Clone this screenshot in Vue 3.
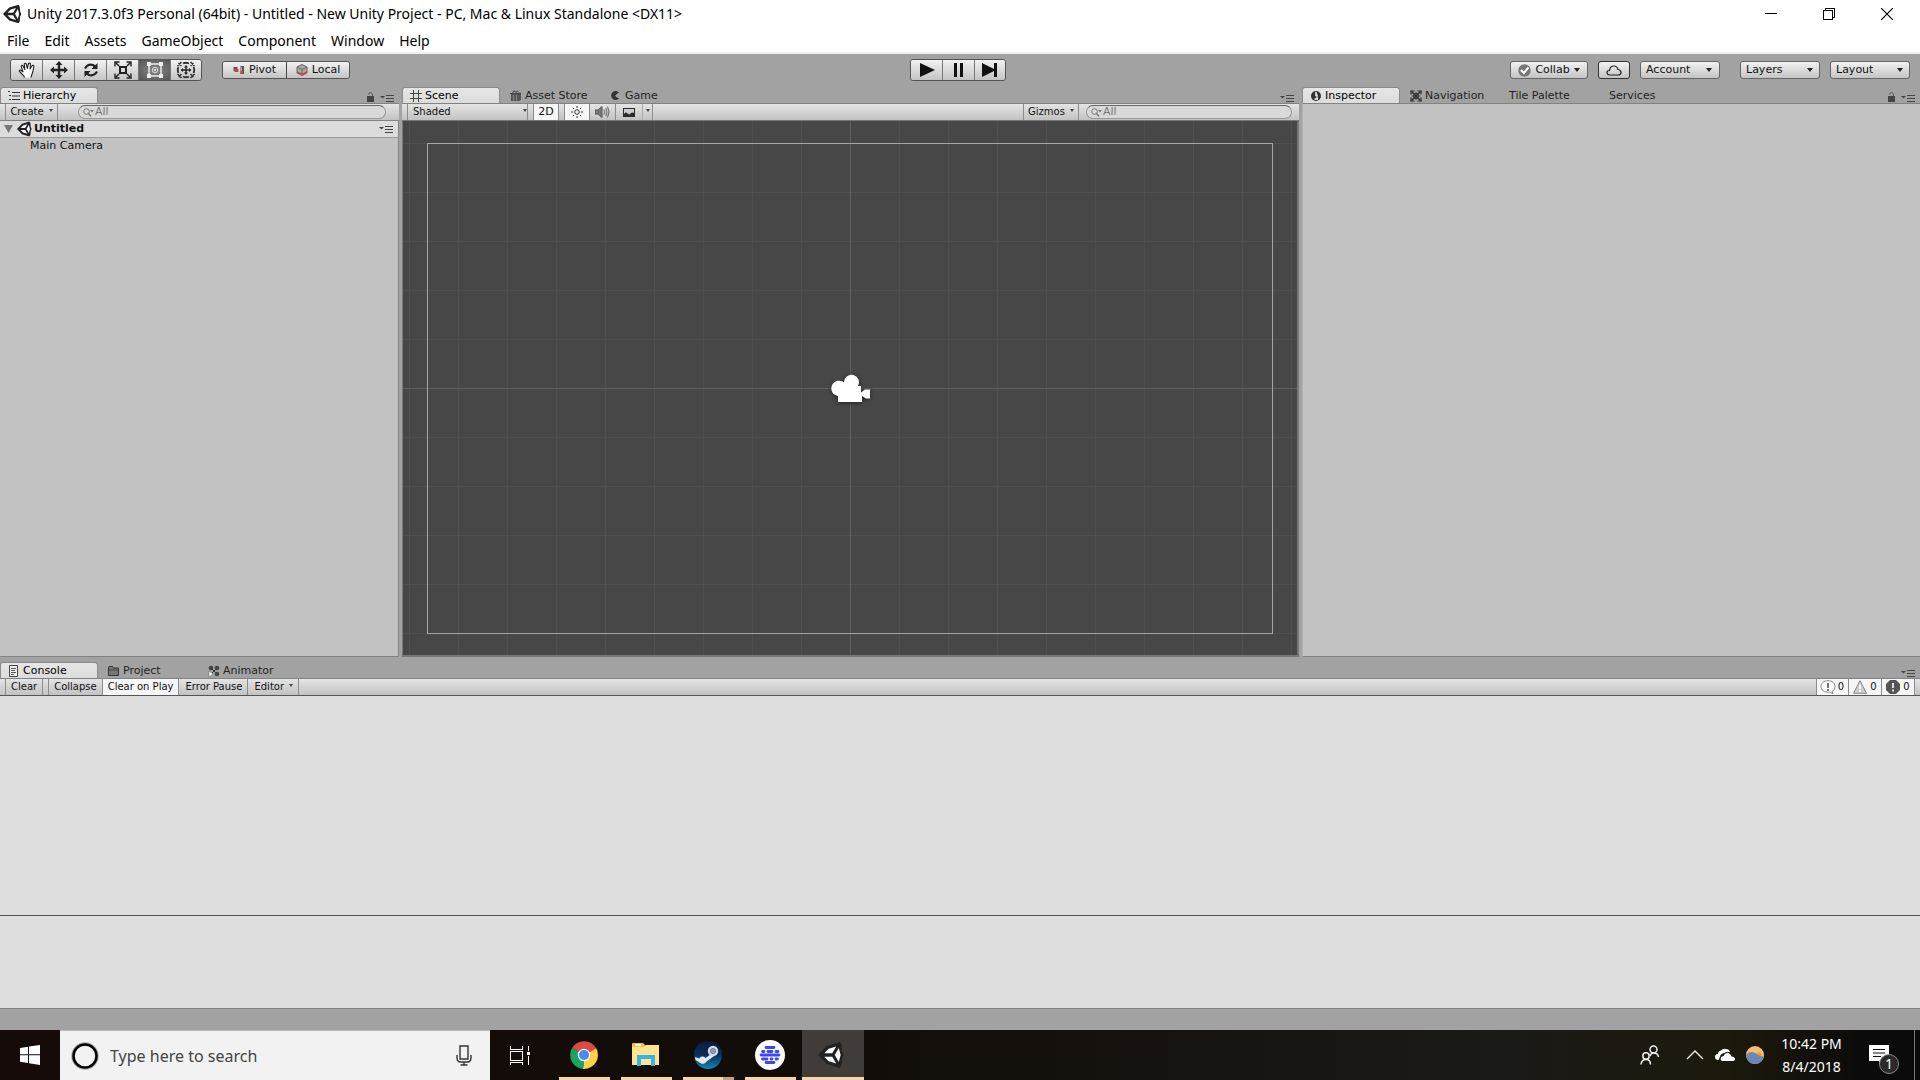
<script setup>
import { ref } from 'vue'

const menus = ['File', 'Edit', 'Assets', 'GameObject', 'Component', 'Window', 'Help']
const tools = ['hand', 'move', 'rotate', 'scale', 'rect', 'transform']
const activeTool = ref('rect')
const gridX = [-9, -8, -7, -6, -5, -4, -3, -2, -1, 1, 2, 3, 4, 5, 6, 7, 8, 9]
const gridY = [-5, -4, -3, -2, -1, 1, 2, 3, 4, 5]
const apps = [
  { id: 'chrome', label: 'Google Chrome' },
  { id: 'explorer', label: 'File Explorer' },
  { id: 'steam', label: 'Steam' },
  { id: 'disc', label: 'Music' },
  { id: 'unity', label: 'Unity' },
]
</script>

<template>
  <div class="desktop">
    <svg class="defs" aria-hidden="true">
      <defs>
        <symbol id="unity" viewBox="0 0 24 24">
          <path d="M0 12 7.5 4.2 18.6 0.8 20 3 20.6 9 22 12 20.6 15 20 21 18.6 23.2 7.5 19.8Z" fill="#222" />
          <path d="M5.4 10.6 9.2 6.6 15.6 4.8 12.2 10.6ZM5.4 13.4 9.2 17.4 15.6 19.2 12.2 13.4ZM17.8 6 19.4 12 17.8 18 14.4 12Z" fill="#fff" />
        </symbol>
        <symbol id="paneMenu" viewBox="0 0 14 8">
          <path d="M0 2h5L2.5 4.5Z" fill="#444" /><path d="M6 1.5h8M6 4.5h8M6 7.5h8" stroke="#444" />
        </symbol>
        <symbol id="lock" viewBox="0 0 8 10">
          <path d="M1 4h7v6H1Z" fill="#444" /><path d="M2.5 2.5Q3 .5 4.500 .5 6.500 .5 6.500 4" fill="none" stroke="#555" />
        </symbol>
        <symbol id="lens" viewBox="0 0 11 9">
          <circle cx="3.500" cy="3.500" r="2.800" fill="none" stroke="#777" /><path d="M5.500 5.500 8 8.500" stroke="#777" stroke-width="1.300" /><path d="M7 2h4L9 4.500Z" fill="#777" />
        </symbol>
        <linearGradient id="steamFill" x1="0" y1="0" x2="0" y2="1"><stop offset="0" stop-color="#0b1a3c" /><stop offset=".5" stop-color="#0b2f5d" /><stop offset="1" stop-color="#1387b8" /></linearGradient>
      </defs>
    </svg>

    <header class="titlebar">
      <svg class="app-logo"><use href="#unity" /></svg>
      <h1>Unity 2017.3.0f3 Personal (64bit) - Untitled - New Unity Project - PC, Mac &amp; Linux Standalone &lt;DX11&gt;</h1>
      <div class="window-controls">
        <button aria-label="Minimize"><svg width="12" height="12" shape-rendering="crispEdges"><path d="M0 5.500h12" stroke="#000" /></svg></button>
        <button aria-label="Restore"><svg width="12" height="12" fill="none" stroke="#000" shape-rendering="crispEdges"><path d="M.5 2.500h9v9h-9ZM2.500 2.500v-2h9v9h-2" /></svg></button>
        <button aria-label="Close"><svg width="12" height="12"><path d="M0 0 12 12M12 0 0 12" stroke="#000" stroke-width="1.200" /></svg></button>
      </div>
    </header>
    <nav class="menubar"><button v-for="m in menus" :key="m">{{ m }}</button></nav>

    <div class="toolbar">
      <div class="group">
        <div class="strip">
          <button v-for="t in tools" :key="t" :aria-label="t" :class="{ on: activeTool === t }" @click="activeTool = t">
            <svg v-if="t === 'hand'" width="18" height="18" viewBox="0 0 18 18" fill="#fff" stroke="#222" stroke-width="1.100" stroke-linejoin="round"><path d="M6.500 16.500Q6 14.500 4.500 13.500L1.500 10.500Q1 9 2.500 9L5 10.800 3.300 5.500Q3.300 4 4.800 4.500L6.800 8.500 6.300 3Q7 1.500 8.300 2.800L9.300 7.500 10.500 2.500Q12 1.500 12.500 3L12 8 14.300 4.500Q16 4 15.800 5.700L14.800 11 12.800 16.500" /></svg>
            <svg v-else-if="t === 'move'" width="18" height="18" viewBox="0 0 18 18" fill="#222"><path d="M9 0 12.500 4H10.200V7.800H14V5.500L18 9 14 12.500V10.200H10.200V14H12.500L9 18 5.500 14H7.800V10.200H4V12.500L0 9 4 5.500V7.800H7.800V4H5.500Z" /></svg>
            <svg v-else-if="t === 'rotate'" width="18" height="18" viewBox="0 0 18 18"><path d="M3 7.500Q6 2.500 11 4L13 5.500M15 10.500Q12 15.500 7 14L5 12.500" fill="none" stroke="#222" stroke-width="2.200" /><path d="M15.500 2V8H9.500ZM2.500 16V10H8.500Z" fill="#222" /></svg>
            <svg v-else-if="t === 'scale'" width="18" height="18" viewBox="0 0 18 18"><path d="M6 6h6v6H6Z" fill="none" stroke="#222" stroke-width="2" /><path d="M1.500 1.500 5 5M16.500 1.500 13 5M1.500 16.500 5 13M16.500 16.500 13 13" stroke="#222" stroke-width="1.500" /><path d="M1 5.500V1H5.500M12.500 1H17V5.500M17 12.500V17H12.500M5.500 17H1V12.500" fill="none" stroke="#222" stroke-width="1.400" /></svg>
            <svg v-else-if="t === 'rect'" width="18" height="18" viewBox="0 0 18 18"><path d="M3 3h12v12H3Z" fill="none" stroke="#eee" stroke-width="1.500" /><path d="M1 1h4v4H1ZM13 1h4v4h-4ZM1 13h4v4H1ZM13 13h4v4h-4Z" fill="#eee" /><circle cx="9" cy="9" r="2.800" fill="none" stroke="#ddd" /><circle cx="9" cy="9" r="1" fill="#fff" /></svg>
            <svg v-else width="20" height="18" viewBox="0 0 20 18"><path d="M10 4 12 6.500H10.700V8.300H13V7L15.500 9 13 11V9.700H10.700V11.500H12L10 14 8 11.500H9.300V9.700H7V11L4.500 9 7 7V8.300H9.300V6.500H8Z" fill="#222" /><path d="M2.500 12Q1 9 2.500 6M17.500 12Q19 9 17.500 6M7 2.500Q10 1 13 2.500M7 15.500Q10 17 13 15.500" fill="none" stroke="#333" stroke-width="1.800" /><path d="M1.500 5 5.500 1M14.500 1l4 4M18.500 13l-4 4M5.500 17l-4-4M2.500 2l3 3M17.500 2l-3 3M2.500 16l3-3M17.500 16l-3-3" fill="none" stroke="#333" stroke-width="1.500" /></svg>
          </button>
        </div>
        <div class="strip low wide">
          <button><svg width="12" height="10" viewBox="0 0 12 10"><path d="M.5 2h4v4h-4ZM7.500 1h3.500v8H7.500Z" fill="#555" /><path d="M1.500 4h4v3h-4ZM7.500 6h2.500v3H7.500Z" fill="#d33f4c" /><path d="M8 2h1v4H8Z" fill="#aaa" /></svg>Pivot</button>
          <button><svg width="12" height="12" viewBox="0 0 12 12"><path d="M6 .5 11 3V9L6 11.500 1 9V3Z" fill="#aaa" stroke="#666" /><path d="M1 3 6 5.500 11 3M6 5.500V11" fill="none" stroke="#666" /><path d="M1 8 6 10.500 11 8" fill="none" stroke="#d33f4c" stroke-width="1.400" /></svg>Local</button>
        </div>
      </div>
      <div class="strip play">
        <button aria-label="Play"><svg width="16" height="14"><path d="M1 0 16 7 1 14Z" fill="#111" /></svg></button>
        <button aria-label="Pause"><svg width="10" height="14"><path d="M0 0H3V14H0ZM6 0H9V14H6Z" fill="#111" /></svg></button>
        <button aria-label="Step"><svg width="16" height="14"><path d="M0 0 12 6V0H15V14H12V8L0 14Z" fill="#111" /></svg></button>
      </div>
      <div class="group right">
        <button class="pill collab"><svg width="13" height="13" viewBox="0 0 13 13"><circle cx="6.500" cy="6.500" r="6.200" fill="#777" /><path d="M3 6 5.800 9 10.500 3.500" fill="none" stroke="#fff" stroke-width="2" /></svg>Collab<i class="tri"></i></button>
        <button class="pill cloud" aria-label="Cloud"><svg width="16" height="11" viewBox="0 0 16 11"><path d="M4 10Q1 10 1 7.500 1 5.500 3.500 5.500 4 1 8 1 11 1 12 4.500 15 5 15 7.500 15 10 12 10Z" fill="none" stroke="#222" stroke-width="1.200" /></svg></button>
        <button class="pill drop">Account<i class="tri"></i></button>
        <label class="pick drop gap"><select class="pill" aria-label="Layers"><option>Layers</option></select><i class="tri"></i></label>
        <label class="pick drop"><select class="pill" aria-label="Layout"><option>Layout</option></select><i class="tri"></i></label>
      </div>
    </div>

    <main class="dock">
      <section class="pane">
        <div class="tabs">
          <button class="tab active"><svg width="12" height="10" viewBox="0 0 12 10"><path d="M0 .5h2M1 4.500h2M1 8.500h2M4 1.500h8M4 5h8M4 8.500h8" stroke="#333" /></svg>Hierarchy</button>
          <span class="corner"><svg width="8" height="10"><use href="#lock" /></svg><svg width="14" height="8"><use href="#paneMenu" /></svg></span>
        </div>
        <div class="minibar">
          <button class="cell create">Create<i class="tri small"></i></button>
          <label class="search hsearch"><svg width="11" height="9"><use href="#lens" /></svg><input placeholder="All" aria-label="Search hierarchy"></label>
        </div>
        <div class="body tree">
          <div class="scene-row"><svg width="9" height="8"><path d="M0 0H9L4.500 8Z" fill="#777" /></svg><svg width="16" height="16"><use href="#unity" /></svg><b>Untitled</b><svg class="end" width="14" height="8"><use href="#paneMenu" /></svg></div>
          <div class="item">Main Camera</div>
        </div>
      </section>

      <section class="pane">
        <div class="tabs">
          <button class="tab active"><svg width="12" height="12"><path d="M3.500 0V12M8.500 0V12M0 3.500H12M0 8.500H12" stroke="#444" /></svg>Scene</button>
          <button class="tab"><svg width="12" height="12" viewBox="0 0 12 12"><path d="M1 3.500h8v7.500H1ZM9 3.500l2-1V10l-2 1Z" fill="#555" /><path d="M0 3.500h11M3 3V1.500Q5 0 6 2.500V3M6 2Q8 0 9 2.500" fill="none" stroke="#444" /><path d="M3.500 5v5.500M6.500 5v5.500" stroke="#888" /></svg>Asset Store</button>
          <button class="tab"><svg width="12" height="12" viewBox="0 0 12 12"><path d="M9 2.500A4.500 4.500 0 1 0 9 8.500L5.500 6.500V5Z" fill="#333" /></svg>Game</button>
          <span class="corner"><svg width="14" height="8"><use href="#paneMenu" /></svg></span>
        </div>
        <div class="minibar">
          <label class="cell pick shaded"><select aria-label="Draw mode"><option>Shaded</option></select><i class="tri small"></i></label>
          <button class="cell lit twod">2D</button>
          <button class="cell lit icon sun" aria-label="Lighting"><svg width="12" height="12" viewBox="0 0 12 12"><circle cx="6" cy="6" r="2.300" fill="none" stroke="#333" /><path d="M6 0V2M6 10V12M0 6H2M10 6H12M1.800 1.800 3 3M9 9l1.200 1.200M1.800 10.200 3 9M9 3l1.200-1.200" stroke="#333" /></svg></button>
          <button class="cell icon" aria-label="Audio"><svg width="15" height="12" viewBox="0 0 15 12"><path d="M0 4H3L7 .5V11.500L3 8H0Z" fill="#777" stroke="#555" /><path d="M9 3.500Q10.500 6 9 8.500M11 2Q13 6 11 10M12.500 .5Q15.500 6 12.500 11.500" fill="none" stroke="#666" /></svg></button>
          <button class="cell icon effects" aria-label="Effects"><svg width="12" height="9" viewBox="0 0 12 9"><path d="M0 0h12v9H0Z" fill="#2c2c2c" /><path d="M1 1H11V5Q8.500 3.500 6.500 6.500L4.500 5.500Q3 3.500 1 6Z" fill="#ccc" /></svg></button>
          <button class="cell fx" aria-label="Effects menu"><i class="tri small"></i></button>
          <button class="cell gizmos">Gizmos<i class="tri small"></i></button>
          <label class="search ssearch"><svg width="11" height="9"><use href="#lens" /></svg><input placeholder="All" aria-label="Search scene"></label>
        </div>
        <div class="body view">
          <svg class="canvas" shape-rendering="crispEdges">
            <svg x="50%" y="50%" overflow="visible">
              <path v-for="i in gridX" :key="'x' + i" :d="`M${i * 49 + .5} -2000V2000`" stroke="#4f4f4f" />
              <path v-for="i in gridY" :key="'y' + i" :d="`M-3000 ${i * 49 + .5}H3000`" stroke="#4f4f4f" />
              <path d="M.5 -2000V2000M-3000 .5H3000" stroke="#606060" />
              <rect x="-422.500" y="-244.500" width="845" height="490" fill="none" stroke="#a4a6a4" />
              <g shape-rendering="geometricPrecision">
                <path class="camera" d="M-12 14V8A7.700 7.700 0 1 1-6-5.500 7.500 7.500 0 1 1 8-2H11V4.500L15 1.500H20V10.500H16L12 8V14Z" />
              </g>
            </svg>
          </svg>
        </div>
      </section>

      <section class="pane">
        <div class="tabs">
          <button class="tab active"><svg width="12" height="12" viewBox="0 0 12 12"><circle cx="6" cy="6" r="5" fill="#333" /><path d="M5 5h2v4M4.500 9h3.500" stroke="#fff" fill="none" stroke-width="1.300" /><circle cx="6" cy="3" r="1" fill="#fff" /></svg>Inspector</button>
          <button class="tab"><svg width="12" height="12" viewBox="0 0 12 12"><path d="M1 1l10 10M11 1 1 11" stroke="#333" stroke-width="1.600" /><path d="M1 4.500V1H4.500M7.500 1H11V4.500M11 7.500V11H7.500M4.500 11H1V7.500M6 3l3 3-3 3-3-3Z" fill="none" stroke="#333" stroke-width="1.200" /></svg>Navigation</button>
          <button class="tab text">Tile Palette</button>
          <button class="tab text">Services</button>
          <span class="corner"><svg width="8" height="10"><use href="#lock" /></svg><svg width="14" height="8"><use href="#paneMenu" /></svg></span>
        </div>
        <div class="body plain"></div>
      </section>
    </main>

    <section class="pane console">
      <div class="tabs">
        <button class="tab active"><svg width="12" height="12" viewBox="0 0 12 12"><path d="M1.500 .5h8v11h-8Z" fill="#eee" stroke="#444" /><path d="M3 3.500h5M3 5.500h4M3 7.500h5M3 9.500h3" stroke="#555" /></svg>Console</button>
        <button class="tab"><svg width="12" height="10" viewBox="0 0 12 10"><path d="M.5 9.500V1.500Q.5 .5 1.500 .5H4.500L5.500 2H10.500V9.500Z" fill="#777" stroke="#333" /><path d="M1 4h9.500" stroke="#444" /></svg>Project</button>
        <button class="tab"><svg width="12" height="12" viewBox="0 0 12 12"><path d="M3 3 9 9M9 3 4 8" stroke="#333" /><circle cx="3" cy="3" r="2.300" fill="#444" /><circle cx="9" cy="3" r="2.300" fill="#444" /><circle cx="9" cy="9" r="2.300" fill="#444" /><path d="M1 6v6l4-3Z" fill="#fff" stroke="#555" stroke-width=".5" /></svg>Animator</button>
        <span class="corner"><svg width="14" height="8"><use href="#paneMenu" /></svg></span>
      </div>
      <div class="minibar">
        <button class="cell first">Clear</button>
        <button class="cell first">Collapse</button>
        <button class="cell lit">Clear on Play</button>
        <button class="cell pause">Error Pause</button>
        <button class="cell editor">Editor<i class="tri small"></i></button>
        <div class="counts">
          <button class="cell lit"><svg width="16" height="14" viewBox="0 0 16 14"><path d="M8 .7C12 .7 15 3 15 6.500 15 9 14 10.500 12 11.500L13 13.500 9.500 12.200C4 12.500 1 10 1 6.500 1 3 4 .7 8 .7Z" fill="#fff" stroke="#888" /><path d="M8 3V8M8 9V11" stroke="#555" stroke-width="1.600" /></svg>0</button>
          <button class="cell lit"><svg width="16" height="14" viewBox="0 0 16 14"><path d="M8 .7 14.500 13.300H1.500Z" fill="#ccc" stroke="#888" /><path d="M8 4.500V9M8 10V12" stroke="#fff" stroke-width="1.600" /></svg>0</button>
          <button class="cell lit"><svg width="16" height="14" viewBox="0 0 16 14"><path d="M5 0H11L15 4V10L11 14H5L1 10V4Z" fill="#555" /><path d="M8 3V8M8 9.500V11.500" stroke="#fff" stroke-width="1.600" /></svg>0</button>
        </div>
      </div>
      <div class="log"></div>
      <div class="detail"></div>
    </section>
    <div class="status"></div>

    <footer class="taskbar">
      <button class="start" aria-label="Start"><svg width="20" height="20" viewBox="0 0 20 20"><path d="M0 3 8 1.800V9.300H0ZM9 1.600 20 0V9.300H9ZM0 10.300H8V18L0 16.800ZM9 10.300H20V20L9 18.300Z" fill="#fff" /></svg></button>
      <label class="cortana">
        <svg width="28" height="28" viewBox="0 0 28 28" fill="none"><circle cx="14" cy="14" r="13" stroke="#aaa" stroke-width="1.500" /><circle cx="14" cy="14" r="11.500" stroke="#000" stroke-width="2.500" /></svg>
        <input placeholder="Type here to search" aria-label="Search Windows">
        <svg width="16" height="21" viewBox="0 0 16 21" fill="none" stroke="#333" stroke-width="1.400"><path d="M4 1H12V14H4ZM1 10V13Q1 17 5 17H11Q15 17 15 13V10M8 17V20M4.500 20H11.500" /></svg>
      </label>
      <button class="taskview" aria-label="Task view"><svg width="21" height="19" fill="none" stroke="#fff" shape-rendering="crispEdges"><path d="M.5 0V3.500H12.500V0M.5 5.500H12.500V14.500H.5ZM.5 19V16.500H12.500V19M18.500 0V5M18.500 10V19" /><path d="M17 6h3v3h-3Z" fill="#fff" stroke="none" /></svg></button>
      <button v-for="a in apps" :key="a.id" class="app" :class="a.id" :aria-label="a.label">
        <svg v-if="a.id === 'chrome'" width="28" height="28" viewBox="0 0 28 28"><path d="M14 14 2 7A14 14 0 0 1 26.100 7Z" fill="#dd4b3e" /><path d="M14 14 26.100 7A14 14 0 0 1 14 28Z" fill="#fdd046" /><path d="M14 14 14 28A14 14 0 0 1 2 7Z" fill="#1da261" /><path d="M14 7.500H26.300L14 14Z" fill="#dd4b3e" /><path d="M20 17 14 28H13L16 17Z" fill="#fdd046" /><path d="M8 17 2 7 9 12Z" fill="#1da261" /><circle cx="14" cy="14" r="6.300" fill="#f4f4f4" /><circle cx="14" cy="14" r="5" fill="#4a8af4" /></svg>
        <svg v-else-if="a.id === 'explorer'" width="28" height="24" viewBox="0 0 28 24"><path d="M0 1Q0 0 1 0H11L14 3H27V22H0Z" fill="#f6c12c" /><path d="M3 1h6v2H3Z" fill="#e9f4fa" /><path d="M0 4H12L14 2H27V22H0Z" fill="#ffe48f" /><path d="M5 12H23V23H19V16H9V23H5Z" fill="#39b2e5" /></svg>
        <svg v-else-if="a.id === 'steam'" width="28" height="28" viewBox="0 0 28 28"><circle cx="14" cy="14" r="14" fill="url(#steamFill)" /><path d="M1 16 9 19 17 13 20 15 12 21Q10 24 6.500 22L1.500 19Z" fill="#e6e9ee" /><circle cx="8.500" cy="19" r="3.500" fill="#e6e9ee" /><circle cx="19" cy="10" r="4" fill="#33517d" stroke="#d7dbe2" stroke-width="2.400" /><circle cx="19" cy="10" r="2.300" fill="#8ba0bb" /></svg>
        <svg v-else-if="a.id === 'disc'" width="30" height="30" viewBox="0 0 30 30"><circle cx="15" cy="15" r="15" fill="#fff" /><g stroke="#3d46f0" stroke-width="2.800" stroke-linecap="round"><path d="M11 7.500H19M7.500 11.500H9M13 11.500H17M21 11.500H23M6 15H24M7.500 19H12M16 19H17M21 19H22.500M11 22.500H19" /></g></svg>
        <svg v-else class="logo" width="28" height="28"><use href="#unity" /></svg>
      </button>
      <div class="tray">
        <button class="people" aria-label="People"><svg width="20" height="20" viewBox="0 0 20 20" fill="none" stroke="#eee" stroke-width="1.500"><circle cx="13.500" cy="4.500" r="3.500" /><circle cx="6" cy="11" r="3.200" /><path d="M1 19.500Q1.500 14.500 6 14.500T10.500 19.500M10 11Q11 8 13.500 8 18 8 18.500 12" /></svg></button>
        <button class="chev" aria-label="Show hidden icons"><svg width="18" height="10"><path d="M1 9 9 1 17 9" fill="none" stroke="#eee" stroke-width="1.400" /></svg></button>
        <button class="onedrive" aria-label="OneDrive"><svg width="20" height="14" viewBox="0 0 20 14"><path d="M3.500 12Q0 12 0 9T3 6Q3 3 6 2.500 8 0 11 1 14 1 15 4L9 5Q5 6 5 9Z" fill="#fff" /><path d="M7 13Q5 12.500 5.500 10T8.500 8Q9.500 5 12.500 5T16.500 8.500Q20 9 20 11T18 13Z" fill="#fff" /><path d="M5 12Q4 9 8 7.500 9 4.500 12.500 4.300 14.500 4.300 16 5.500" fill="none" stroke="#1b1810" stroke-width=".8" /></svg></button>
        <button class="weather" aria-label="Weather"><svg width="18" height="18" viewBox="0 0 18 18"><circle cx="9" cy="9" r="9" fill="#f5bd67" /><path d="M0 9Q4 4 9 7T17.800 11Q16 18 9 18 1 18 0 9Z" fill="#6c86b8" /><path d="M11 7Q14 5 16 9L14 10Z" fill="#ec962e" /></svg></button>
        <div class="clock"><time>10:42 PM</time><time>8/4/2018</time></div>
        <button class="notes" aria-label="Notifications"><svg width="20" height="20" viewBox="0 0 20 20"><path d="M0 0H20V16H14L10 20V16H0Z" fill="#fff" /><path d="M4 4.500H16M4 8H16M4 11.500H12" stroke="#111" stroke-width="1.200" /></svg><span class="badge">1</span></button>
      </div>
    </footer>
  </div>
</template>

<style>
body { margin: 0; }
</style>

<style scoped>
* { box-sizing: border-box; }
.desktop { min-height: 100vh; display: flex; flex-direction: column; background: #a2a2a2; font: 11px/14px "DejaVu Sans", sans-serif; color: #111; }
.defs { position: absolute; width: 0; height: 0; }
button, select, input { font: inherit; color: inherit; margin: 0; padding: 0; border: 0; background: none; appearance: none; border-radius: 0; outline: 0; white-space: nowrap; }
svg { display: block; flex: none; }

.titlebar { display: flex; align-items: center; height: 28px; background: #fff; padding-left: 3px; font-family: "Noto Sans", sans-serif; color: #000; }
.app-logo { width: 20px; height: 20px; }
h1 { margin: 0 0 0 4px; font-size: 14px; line-height: 20px; font-weight: 400; white-space: nowrap; flex: 1; }
.window-controls { display: flex; margin-right: 4px; }
.window-controls button { width: 58px; height: 28px; display: flex; align-items: center; justify-content: center; }
.menubar { display: flex; gap: 1px; height: 26px; background: #fff; border-bottom: 2px solid #f0f0f0; font: 14px/24px "Noto Sans", sans-serif; color: #000; }
.menubar button { padding: 1px 7px 0; }

.toolbar { display: grid; grid-template-columns: 1fr auto 1fr; align-items: center; height: 33px; padding: 0 10px 1px; flex: none; }
.group { display: flex; align-items: center; gap: 20px; }
.strip { display: flex; border: 1px solid #555; border-radius: 3px; overflow: hidden; }
.strip button { width: 32px; height: 20px; display: flex; align-items: center; justify-content: center; gap: 4px; background: linear-gradient(#f2f2f2, #c4c4c4); border-left: 1px solid #777; }
.strip button:first-child { width: 31px; border-left: 0; }
.strip button:last-child { width: 31px; }
.strip button.on { background: radial-gradient(#888, #555); }
.strip.wide button { width: 63px; height: 16px; border-color: #444; }
.play { margin-right: 4px; }
.right { justify-content: flex-end; gap: 10px; }
.pill { height: 18px; border: 1px solid #666; border-radius: 3px; background: linear-gradient(#f2f2f2, #c4c4c4); display: flex; align-items: center; justify-content: center; gap: 4px; }
.collab { width: 78px; }
.cloud { width: 32px; border-color: #333; }
.drop { width: 80px; }
button.drop { justify-content: space-between; padding: 0 7px 0 5px; }
.gap { margin-left: 10px; }
.pick { display: flex; align-items: center; }
.pick select { width: 100%; padding-left: 5px; }
.pick .tri { margin-left: -13px; pointer-events: none; }
.tri { border: 3px solid transparent; border-top: 4px solid #222; border-bottom: 0; flex: none; }
.tri.small { border-width: 3px 2px 0; border-top-color: #444; }

.dock { display: grid; grid-template-columns: 399fr 897fr 618fr; gap: 3px; height: 50vh; min-height: 570px; flex: none; }
.pane { display: flex; flex-direction: column; min-width: 0; }
.tabs { display: flex; height: 16px; flex: none; }
.tab { width: 100px; display: flex; align-items: center; gap: 3px; padding: 1px 0 0 8px; color: #222; }
.tab.active { width: 98px; margin-right: 2px; padding: 0 0 0 7px; background: linear-gradient(#e6e6e6, #dcdcdc); border: 1px solid #8a8a8a; border-bottom: 0; border-radius: 3px 3px 0 0; color: #000; }
.tab.text { padding-left: 7px; }
.corner { margin-left: auto; display: flex; align-items: flex-end; gap: 6px; padding: 0 5px 1px 0; }
.minibar { display: flex; height: 17px; flex: none; padding-left: 5px; border-top: 1px solid #828282; background: linear-gradient(#e4e4e4, #c2c2c2); font-size: 10px; }
.cell { display: flex; align-items: center; justify-content: center; gap: 5px; padding: 0 5px; border-right: 1px solid #8c8c8c; }
.cell:first-child { border-left: 1px solid #8c8c8c; }
.cell .tri { margin-bottom: 3px; }
.lit { background: #f6f6f6; }
.create { width: 53px; }
.search { display: flex; align-items: center; height: 14px; margin-top: 1px; padding-left: 4px; gap: 1px; border: 1px solid #999; border-top-color: #666; border-radius: 7px; background: #d9d9d9; font-size: 11px; color: #777; }
.search input { flex: 1; min-width: 0; height: 12px; line-height: 12px; }
.search input::placeholder { color: #777; opacity: 1; }
.hsearch { flex: 1; margin-left: 20px; margin-right: 13px; }
.body { flex: 1; border: 1px solid #828282; border-left-color: #b4b4b4; background: #c2c2c2; }
.tree { border-left: 0; }
.scene-row { display: flex; align-items: center; height: 17px; padding: 0 5px 0 4px; background: #dcdcdc; border-bottom: 1px solid #999; }
.scene-row svg + svg { margin-left: 4px; }
.scene-row b { flex: 1; padding-left: 1px; }
.item { padding: 1px 0 0 30px; }
.shaded { width: 121px; padding: 0; justify-content: flex-start; }
.shaded .tri { margin-left: -8px; }
.shaded select { height: 16px; }
.twod { margin-left: 5px; width: 26px; border-left: 1px solid #8c8c8c; font-size: 11px; }
.sun { margin-left: 5px; border-left: 1px solid #8c8c8c; }
.icon { width: 26px; }
.effects { border-right: 0; }
.fx { width: 11px; padding: 0; border-left: 1px solid #aaa; }
.gizmos { margin-left: auto; border-left: 1px solid #8c8c8c; width: 56px; }
.ssearch { width: 206px; margin: 1px 7px 0 7px; }
.view { background: #474747; border-color: #777; border-width: 1px 2px 2px 1px; min-height: 0; }
.canvas { width: 100%; height: 100%; }
.camera { fill: #fff; filter: drop-shadow(0 1px 2px #222); }
.plain { border-top-color: #828282; border-right: 0; }

.console { flex: 1; margin-top: 5px; }
.first { margin-right: 5px; }
.first + .first { margin-right: 0; border-left: 1px solid #8c8c8c; }
.pause, .editor { padding: 0 5px 0 6px; }
.counts { display: flex; margin-left: auto; margin-right: 5px; }
.counts .cell { width: 33px; gap: 2px; padding: 0 3px 0 2px; }
.log { flex: 220; border-top: 1px solid #555; border-bottom: 1px solid #555; background: #dedede; }
.detail { flex: 93; background: #dedede; border-bottom: 1px solid #828282; }
.status { height: 21px; flex: none; }

.taskbar { display: flex; height: 50px; flex: none; background: linear-gradient(90deg, #150c0a, #120d09 45%, #1a1a17 78%, #1d190c 90%, #0b0b0b 97%); font-family: "Noto Sans", sans-serif; color: #fff; }
.taskbar button { display: flex; align-items: center; justify-content: center; flex: none; }
.start { width: 60px; }
.cortana { width: 430px; display: flex; align-items: center; padding: 0 18px 0 11px; gap: 11px; background: #f2f2f2; border-top: 1px solid #bbb; color: #444; font-size: 16px; }
.cortana input { flex: 1; min-width: 0; height: 24px; line-height: 24px; }
.cortana input::placeholder { color: #444; opacity: 1; }
.taskview { width: 64px; padding-right: 4px; }
.taskbar .app { width: 62px; padding-right: 2px; background: linear-gradient(#fdd3a5, #fdd3a5) 5px 100% / 51px 3px no-repeat; }
.taskbar .app.steam { background-image: linear-gradient(90deg, #fdd3a5 40px, #c3a284 40px); }
.taskbar .app.unity { background: linear-gradient(#fdd3a5, #fdd3a5) 0 100% / 100% 3px no-repeat #403c39; }
.tray { margin-left: auto; display: flex; }
.people { width: 60px; }
.chev { width: 30px; }
.onedrive { width: 30px; }
.weather { width: 30px; }
.clock { width: 83px; display: flex; flex-direction: column; justify-content: center; text-align: center; font-size: 14px; line-height: 23px; }
.taskbar .notes { position: relative; width: 62px; margin-right: 5px; padding-left: 16px; justify-content: flex-start; border-right: 1px solid #777; }
.badge { position: absolute; left: 26px; top: 24px; width: 20px; height: 20px; border: 1px solid #888; border-radius: 50%; background: #2a2a2a; font-size: 14px; line-height: 18px; text-align: center; }
</style>
